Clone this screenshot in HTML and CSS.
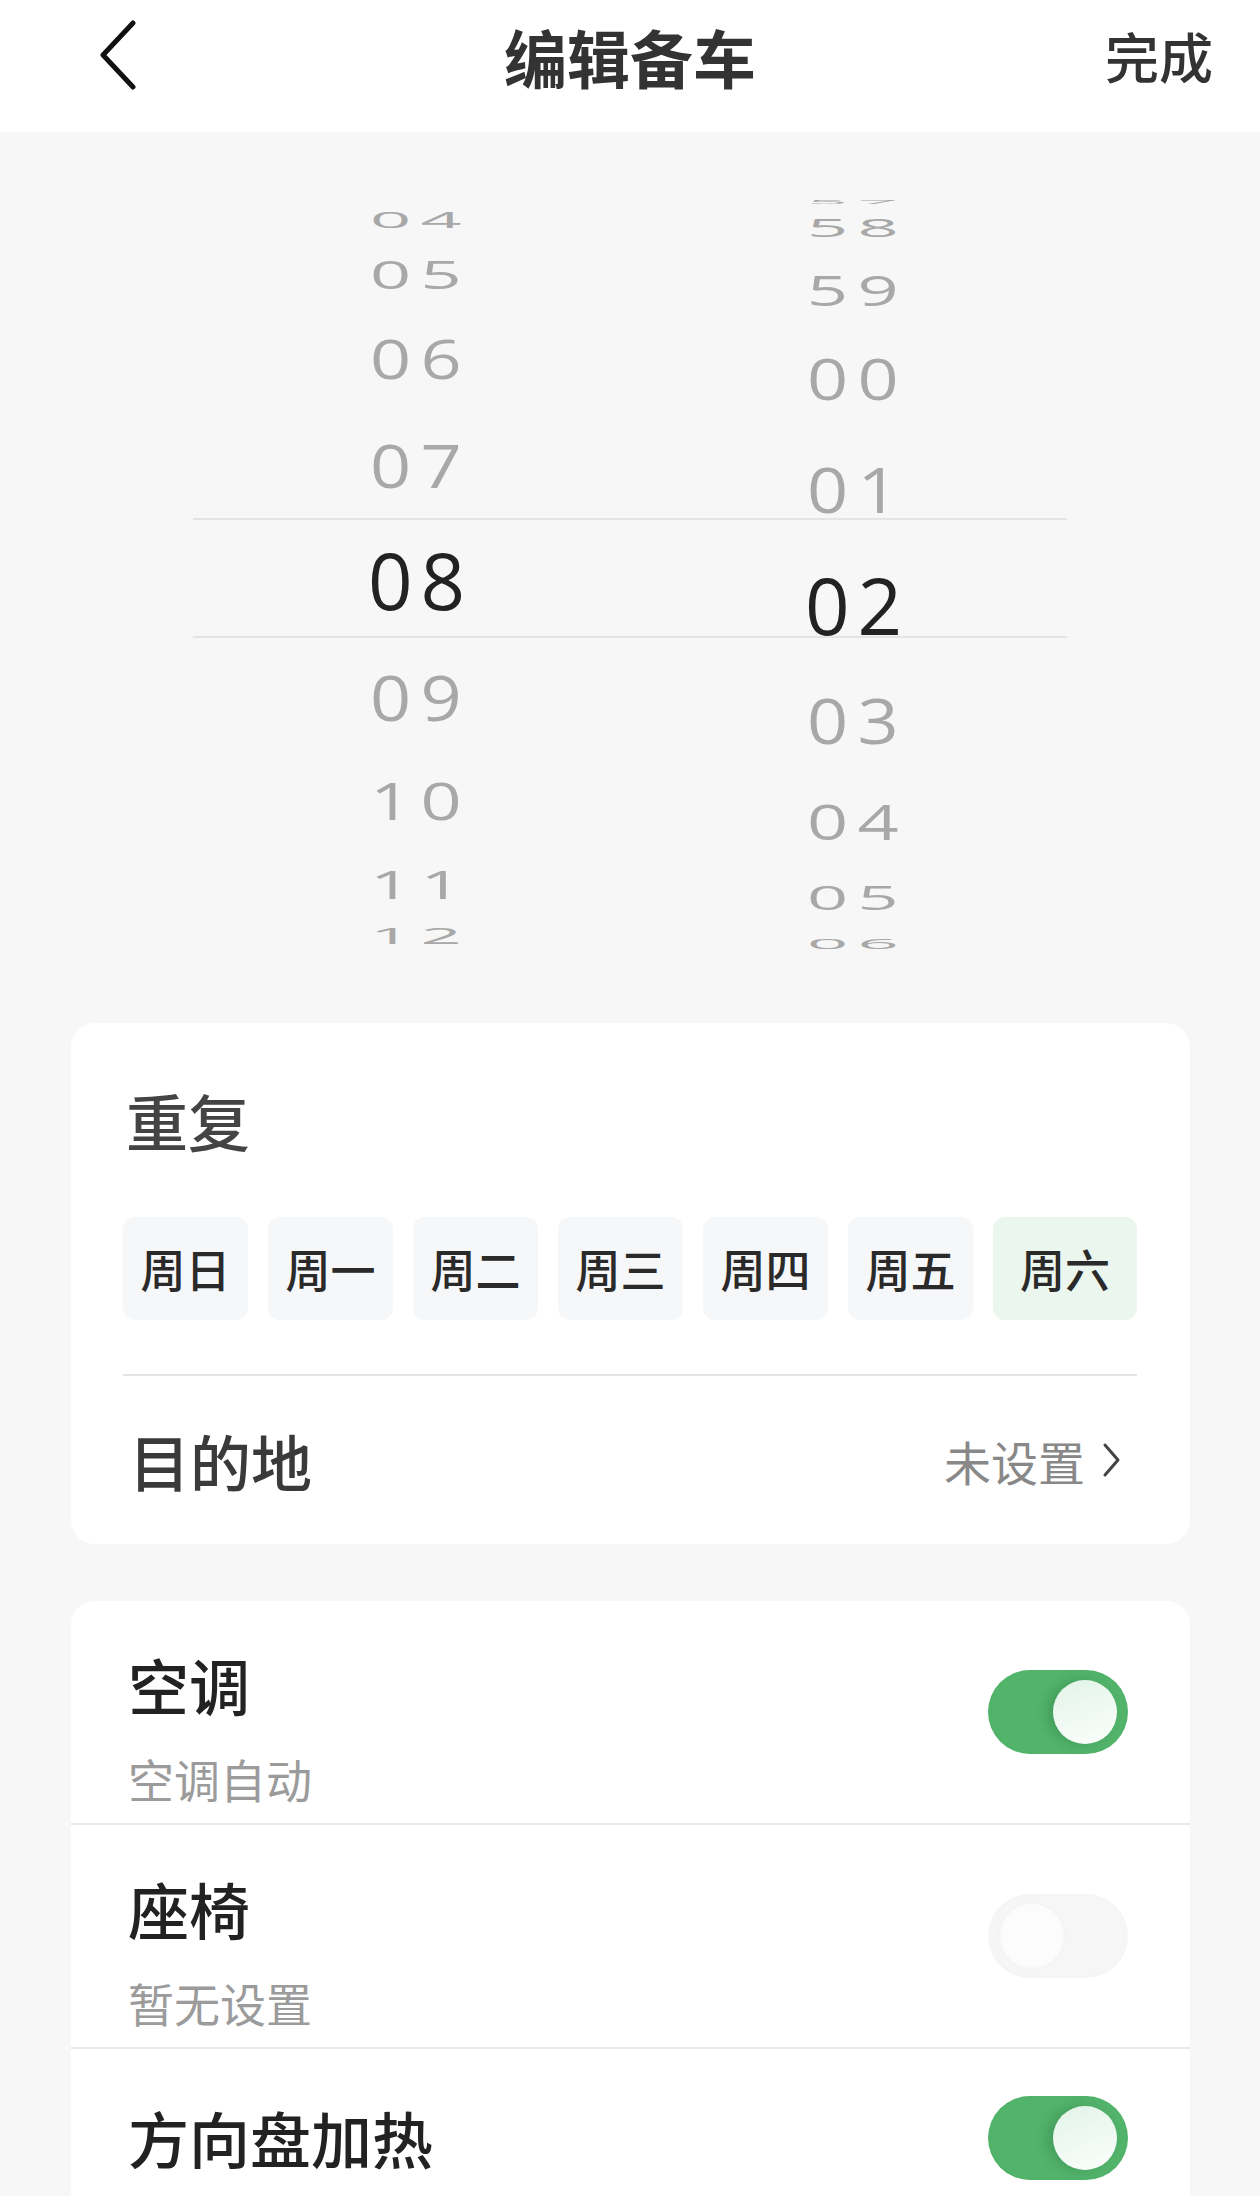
FILE: index.html
```html
<!DOCTYPE html>
<html lang="zh-CN">

<head>
    <meta charset="UTF-8">
    <meta name="viewport" content="width=device-width, initial-scale=1.0">
    <title>编辑备车</title>
    <link rel="stylesheet" href="styles.css">
</head>

<body>
    <!-- 顶部导航 -->
    <header class="nav">
        <div class="nav-left">
            <svg class="back" viewBox="0 0 45 72" width="45" height="72">
                <path d="M38 3 L8 35 L38 67" fill="none" stroke="#111" stroke-width="5" stroke-linecap="round" stroke-linejoin="round" />
            </svg>
        </div>
        <h1 class="nav-title">编辑备车</h1>
        <div class="nav-right">完成</div>
    </header>

    <!-- 时间滚轮 -->
    <section class="picker">
        <div class="wheel">
            <div class="col hours">
                <div class="cell"><span>04</span></div>
                <div class="cell"><span>05</span></div>
                <div class="cell"><span>06</span></div>
                <div class="cell"><span>07</span></div>
                <div class="cell active"><span>08</span></div>
                <div class="cell"><span>09</span></div>
                <div class="cell"><span>10</span></div>
                <div class="cell"><span>11</span></div>
                <div class="cell"><span>12</span></div>
            </div>
            <div class="col minutes">
                <div class="cell"><span>57</span></div>
                <div class="cell"><span>58</span></div>
                <div class="cell"><span>59</span></div>
                <div class="cell"><span>00</span></div>
                <div class="cell"><span>01</span></div>
                <div class="cell active"><span>02</span></div>
                <div class="cell"><span>03</span></div>
                <div class="cell"><span>04</span></div>
                <div class="cell"><span>05</span></div>
                <div class="cell"><span>06</span></div>
            </div>
        </div>
    </section>

    <!-- 重复 / 目的地 -->
    <section class="card">
        <h2 class="card-title">重复</h2>
        <div class="days">
            <div class="day">周日</div>
            <div class="day">周一</div>
            <div class="day">周二</div>
            <div class="day">周三</div>
            <div class="day">周四</div>
            <div class="day">周五</div>
            <div class="day on">周六</div>
        </div>
        <div class="dest">
            <span class="dest-label">目的地</span>
            <span class="dest-value">未设置
                <svg viewBox="0 0 30 36" width="30" height="36">
                    <path d="M8 3 L21 18 L8 33" fill="none" stroke="#444" stroke-width="3" stroke-linecap="round" stroke-linejoin="round" />
                </svg>
            </span>
        </div>
    </section>

    <!-- 设备开关 -->
    <section class="card list">
        <div class="row">
            <div class="row-text">
                <div class="row-title">空调</div>
                <div class="row-sub">空调自动</div>
            </div>
            <div class="switch on"><i></i></div>
        </div>
        <div class="row">
            <div class="row-text">
                <div class="row-title">座椅</div>
                <div class="row-sub">暂无设置</div>
            </div>
            <div class="switch"><i></i></div>
        </div>
        <div class="row single">
            <div class="row-text">
                <div class="row-title">方向盘加热</div>
            </div>
            <div class="switch on"><i></i></div>
        </div>
    </section>
</body>

</html>
```

FILE: styles.css
```css
* {
    box-sizing: border-box;
}

body {
    margin: 0;
    background: #f7f7f7;
    font-family: "Noto Sans CJK SC", "Noto Sans", sans-serif;
    color: #222;
    overflow: hidden;
}

/* 顶部导航 */
.nav {
    height: 132px;
    padding-bottom: 20px;
    background: #fff;
    display: grid;
    grid-template-columns: 1fr auto 1fr;
    align-items: center;
}

.nav-left {
    padding-left: 95px;
    display: flex;
    align-items: center;
}

.nav-title {
    margin: 0;
    font-size: 63px;
    font-weight: 700;
    color: #333;
    line-height: 72px;
}

.nav-right {
    justify-self: end;
    padding-right: 47px;
    font-size: 54px;
    font-weight: 500;
    color: #333;
    line-height: 72px;
}

/* 时间滚轮 */
.picker {
    padding: 64px 0 66px;
}

.wheel {
    position: relative;
    width: 874px;
    height: 761px;
    margin: 0 auto;
    display: grid;
    grid-template-columns: 1fr 1fr;
    overflow: hidden;
}

.wheel::before,
.wheel::after {
    content: "";
    position: absolute;
    left: 0;
    right: 0;
    height: 2px;
    background: #e4e4e4;
}

.wheel::before {
    top: 322px;
}

.wheel::after {
    top: 440px;
}

.col {
    display: flex;
    flex-direction: column;
}

.cell {
    display: flex;
    align-items: center;
    justify-content: center;
    padding-left: 18px;
    font-family: "Open Sans", sans-serif;
    font-size: 72px;
    letter-spacing: 0.13em;
    color: #a8a8a8;
}

.cell span {
    line-height: 1;
}

.cell.active {
    font-size: 78px;
    letter-spacing: 0.1em;
    color: #222;
}

/* 小时列 */
.hours .cell:nth-child(1) { height: 47px; }
.hours .cell:nth-child(1) span { transform: scaleY(0.29); }
.hours .cell:nth-child(2) { height: 61px; }
.hours .cell:nth-child(2) span { transform: scaleY(0.53); }
.hours .cell:nth-child(3) { height: 107px; }
.hours .cell:nth-child(3) span { transform: scaleY(0.76); }
.hours .cell:nth-child(4) { height: 105px; }
.hours .cell:nth-child(4) span { transform: scaleY(0.84); }
.hours .cell:nth-child(5) { height: 128px; }
.hours .cell:nth-child(6) { height: 103px; }
.hours .cell:nth-child(6) span { transform: scaleY(0.875); }
.hours .cell:nth-child(7) { height: 106px; }
.hours .cell:nth-child(7) span { transform: scaleY(0.7); }
.hours .cell:nth-child(8) { height: 61px; }
.hours .cell:nth-child(8) span { transform: scaleY(0.53); }
.hours .cell:nth-child(9) { height: 43px; }
.hours .cell:nth-child(9) span { transform: scaleY(0.29); }

/* 分钟列 */
.minutes .cell:nth-child(1) { height: 12px; }
.minutes .cell:nth-child(1) span { transform: scaleY(0.08); }
.minutes .cell:nth-child(2) { height: 38px; }
.minutes .cell:nth-child(2) span { transform: scaleY(0.35); }
.minutes .cell:nth-child(3) { height: 88px; }
.minutes .cell:nth-child(3) span { transform: scaleY(0.58); }
.minutes .cell:nth-child(4) { height: 88px; }
.minutes .cell:nth-child(4) span { transform: scaleY(0.78); }
.minutes .cell:nth-child(5) { height: 131px; }
.minutes .cell:nth-child(5) span { transform: scaleY(0.875); }
.minutes .cell:nth-child(6) { height: 104px; }
.minutes .cell:nth-child(7) { height: 126px; }
.minutes .cell:nth-child(7) span { transform: scaleY(0.86); }
.minutes .cell:nth-child(8) { height: 75px; }
.minutes .cell:nth-child(8) span { transform: scaleY(0.68); }
.minutes .cell:nth-child(9) { height: 77px; }
.minutes .cell:nth-child(9) span { transform: scaleY(0.45); }
.minutes .cell:nth-child(10) { height: 15px; }
.minutes .cell:nth-child(10) span { transform: scaleY(0.21); }

/* 卡片 */
.card {
    margin: 0 70px 57px 71px;
    background: #fff;
    border-radius: 24px;
    padding: 60px 53px 0 52px;
}

.card-title {
    margin: 0;
    padding-left: 3px;
    font-size: 62px;
    font-weight: 500;
    line-height: 74px;
    color: #444;
}

.days {
    display: grid;
    grid-template-columns: repeat(6, 125px) 1fr;
    gap: 20px;
    margin-top: 60px;
}

.day {
    height: 103px;
    border-radius: 12px;
    background: #f6f7f9;
    display: flex;
    align-items: center;
    justify-content: center;
    font-size: 45px;
    font-weight: 500;
    color: #2a2a2a;
}

.day.on {
    background: #eaf6ee;
}

.dest {
    margin-top: 54px;
    border-top: 2px solid #e4e4e4;
    height: 170px;
    display: flex;
    align-items: center;
    justify-content: space-between;
    padding-left: 6px;
}

.dest-label {
    font-size: 61px;
    font-weight: 500;
    color: #3a3a3a;
}

.dest-value {
    display: flex;
    align-items: center;
    gap: 12px;
    font-size: 47px;
    color: #888;
    padding-right: 10px;
}

/* 开关列表 */
.list {
    padding: 0;
    margin-bottom: 0;
    border-radius: 24px 24px 0 0;
}

.row {
    display: flex;
    align-items: center;
    justify-content: space-between;
    padding: 47px 62px 15px 57px;
    border-bottom: 2px solid #e9e9e9;
}

.row .switch {
    margin-top: -32px;
}

.row.single {
    padding-bottom: 47px;
    border-bottom: none;
}

.row.single .switch {
    margin-top: 0;
}

.row-title {
    font-size: 61px;
    font-weight: 500;
    line-height: 74px;
    color: #222;
}

.row-sub {
    margin-top: 26px;
    font-size: 46px;
    line-height: 60px;
    color: #9b9b9b;
}

.switch {
    position: relative;
    width: 140px;
    height: 84px;
    border-radius: 42px;
    background: #f6f6f6;
    box-shadow: inset 0 0 6px rgba(0, 0, 0, 0.015);
}

.switch i {
    position: absolute;
    top: 10px;
    left: 12px;
    width: 64px;
    height: 64px;
    border-radius: 50%;
    background: #fcfcfc;
    box-shadow: 0 0 8px rgba(0, 0, 0, 0.02);
}

.switch.on {
    background: #52b36b;
}

.switch.on i {
    left: auto;
    right: 11px;
    background: linear-gradient(160deg, #e2f4e8, #fbfefc);
    box-shadow: -6px 0 12px rgba(0, 60, 20, 0.18);
}
```
